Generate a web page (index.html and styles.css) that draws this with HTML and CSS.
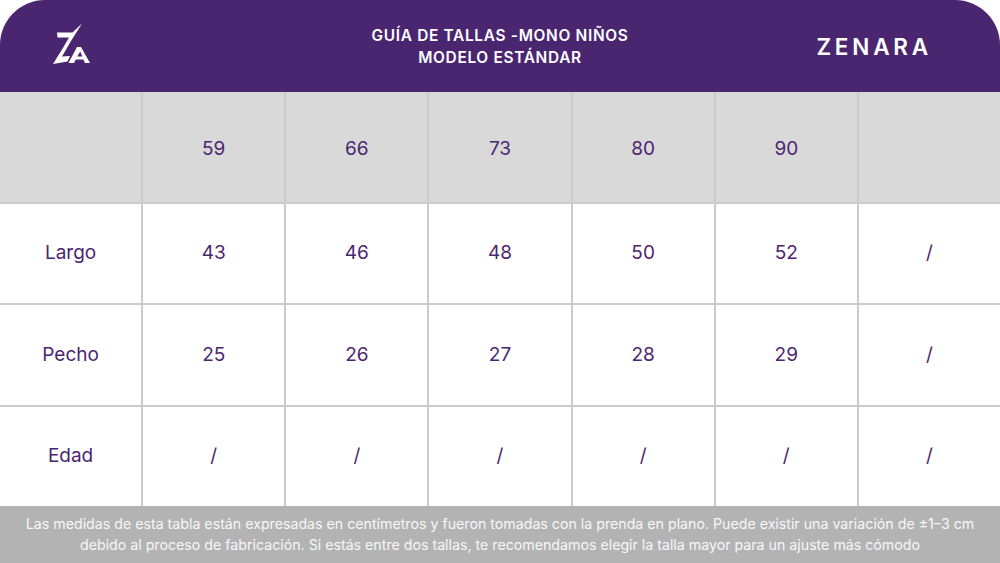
FILE: index.html
```html
<!DOCTYPE html>
<html lang="es">
<head>
<meta charset="utf-8">
<link rel="stylesheet" href="styles.css">
</head>
<body>
<div class="page">
  <header class="top">
    <div class="logo">
      <svg width="45" height="48" viewBox="48 20 45 48">
        <polygon fill="#fff" points="57,32.5 72.5,32.5 82,23.5 71,41 62,56.5 70,56 67.5,61.5 53,64 63.5,47 69,37.5 57.5,37.5" />
        <polygon fill="#fff" points="68.5,63 77,47 81,47 90,63 85,63 83.3,59.5 75.8,59.5 74,63" />
        <polygon fill="#4b2670" points="77.3,56.5 82.3,56.5 80.2,51.5" />
      </svg>
    </div>
    <div class="title">GUÍA DE TALLAS -MONO NIÑOS<br>MODELO ESTÁNDAR</div>
    <div class="brand">ZENARA</div>
  </header>
  <div class="table">
    <div class="cell head"></div>
    <div class="cell head">59</div>
    <div class="cell head">66</div>
    <div class="cell head">73</div>
    <div class="cell head">80</div>
    <div class="cell head">90</div>
    <div class="cell head"></div>

    <div class="cell">Largo</div>
    <div class="cell">43</div>
    <div class="cell">46</div>
    <div class="cell">48</div>
    <div class="cell">50</div>
    <div class="cell">52</div>
    <div class="cell">/</div>

    <div class="cell">Pecho</div>
    <div class="cell">25</div>
    <div class="cell">26</div>
    <div class="cell">27</div>
    <div class="cell">28</div>
    <div class="cell">29</div>
    <div class="cell">/</div>

    <div class="cell">Edad</div>
    <div class="cell">/</div>
    <div class="cell">/</div>
    <div class="cell">/</div>
    <div class="cell">/</div>
    <div class="cell">/</div>
    <div class="cell">/</div>
  </div>
  <footer class="note">Las medidas de esta tabla están expresadas en centímetros y fueron tomadas con la prenda en plano. Puede existir una variación de ±1–3 cm<br>debido al proceso de fabricación. Si estás entre dos tallas, te recomendamos elegir la talla mayor para un ajuste más cómodo</footer>
</div>
</body>
</html>
```
FILE: styles.css
```css
html, body {
  margin: 0;
  padding: 0;
  background: #ffffff;
}
body {
  font-family: "Inter", "Open Sans", "Liberation Sans", sans-serif;
  overflow: hidden;
}
.page {
  width: 1000px;
  height: 563px;
  display: flex;
  flex-direction: column;
}
.top {
  height: 92px;
  background: #4b2670;
  border-radius: 45px 45px 0 0;
  display: grid;
  grid-template-columns: 1fr auto 1fr;
  align-items: center;
  color: #fff;
}
.logo {
  padding-left: 48px;
  align-self: start;
  padding-top: 20px;
  display: flex;
}
.title {
  text-align: center;
  font-size: 15.4px;
  font-weight: 600;
  line-height: 22px;
  letter-spacing: 0.7px;
  padding-top: 2px;
}
.brand {
  justify-self: end;
  padding-right: 68px;
  font-size: 22.5px;
  font-weight: 600;
  letter-spacing: 3.8px;
  padding-top: 0;
}
.table {
  display: grid;
  grid-template-columns: repeat(7, 1fr);
  grid-template-rows: 110px 99px 100px 99px;
  gap: 2px;
  background: #cbcbcb;
}
.cell {
  background: #ffffff;
  color: #4b2670;
  font-size: 19px;
  display: flex;
  align-items: center;
  justify-content: center;
  padding-bottom: 2px;
}
.cell.head {
  background: #d9d9d9;
  padding-top: 2px;
  padding-bottom: 0;
}
.note {
  flex: 1;
  background: #b3b3b3;
  color: #f7f7f7;
  font-size: 14.2px;
  line-height: 21px;
  text-align: center;
  display: flex;
  align-items: center;
  justify-content: center;
  padding-bottom: 1px;
}
```
